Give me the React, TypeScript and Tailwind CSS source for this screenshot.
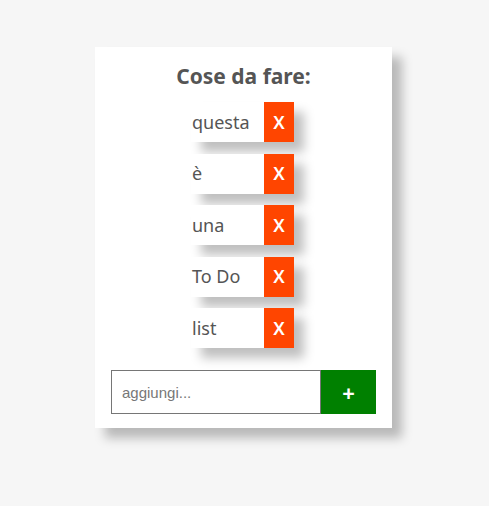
const items = ["questa", "è", "una", "To Do", "list"];

export default function App() {
  return (
    <div className="min-h-[506px] w-full bg-[#f6f6f6] pt-[47px]" style={{ fontFamily: '"Noto Sans", "Open Sans", sans-serif' }}>
      <div className="ml-[95px] w-[297px] bg-white px-4 pt-[12px] pb-[14px] shadow-[10px_10px_10px_rgba(0,0,0,0.25)]">
        <h1 className="text-center text-[21px] font-bold leading-[34px] text-[#555]">Cose da fare:</h1>
        <ul className="mt-[9px] flex flex-col items-center gap-[11.5px]">
          {items.map((t) => (
            <li key={t} className="flex h-[40px] w-[103px] -translate-x-px items-center bg-white shadow-[10px_10px_10px_rgba(0,0,0,0.25)]">
              <span className="flex-1 pl-[1px] text-[18px] text-[#555]">{t}</span>
              <button className="flex h-[40px] w-[30px] items-center justify-center bg-[#ff4500] text-[18px] font-semibold text-white">
                X
              </button>
            </li>
          ))}
        </ul>
        <div className="mt-[22px] flex h-[44px]">
          <input
            placeholder="aggiungi..."
            className="h-full w-[210px] border border-[#767676] px-[10px] text-[15px] text-[#333] placeholder:text-[#777] outline-none"
            style={{ fontFamily: '"Liberation Sans", Arial, sans-serif' }}
          />
          <button className="flex h-full flex-1 items-center justify-center bg-[#008000] text-[22px] font-bold text-white">
            +
          </button>
        </div>
      </div>
    </div>
  );
}
